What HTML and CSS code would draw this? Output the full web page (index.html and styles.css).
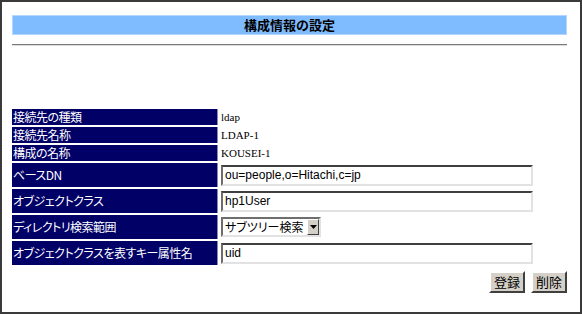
FILE: index.html
```html
<!DOCTYPE html>
<html lang="ja">
<head>
<meta charset="utf-8">
<link rel="stylesheet" href="styles.css">
</head>
<body>
<div class="page">
  <div class="title">構成情報の設定</div>
  <div class="rule"></div>
  <table class="form">
    <tr><th>接続先の種類</th><td class="val">ldap</td></tr>
    <tr><th>接続先名称</th><td class="val">LDAP-1</td></tr>
    <tr><th>構成の名称</th><td class="val">KOUSEI-1</td></tr>
    <tr class="in"><th>ベースDN</th><td><input class="text" type="text" value="ou=people,o=Hitachi,c=jp"></td></tr>
    <tr class="in"><th>オブジェクトクラス</th><td><input class="text" type="text" value="hp1User"></td></tr>
    <tr class="in"><th>ディレクトリ検索範囲</th><td>
      <div class="select"><span class="sel-text">サブツリー検索</span><span class="sel-btn"><svg width="7" height="4" viewBox="0 0 7 4"><path d="M0 0H7L3.5 4Z" fill="#000"/></svg></span></div>
    </td></tr>
    <tr class="in"><th>オブジェクトクラスを表すキー属性名</th><td><input class="text" type="text" value="uid"></td></tr>
  </table>
  <div class="buttons">
    <button class="btn">登録</button>
    <button class="btn">削除</button>
  </div>
</div>
</body>
</html>
```
FILE: styles.css
```css
html, body {
  margin: 0;
  padding: 0;
}
body {
  width: 582px;
  height: 314px;
  box-sizing: border-box;
  border: 2px solid #3a3a3a;
  background: #fff;
  font-family: "Noto Sans CJK JP", sans-serif;
  overflow: hidden;
}
.page {
  width: 555px;
  margin-left: 10px;
  padding-top: 13px;
}
.title {
  height: 18px;
  background: #7fbbff;
  border: 1px solid #b5d6ff;
  text-align: center;
  font-weight: bold;
  font-size: 13px;
  line-height: 18px;
  color: #000;
  font-feature-settings: "palt";
}
.rule {
  margin-top: 9px;
  height: 1px;
  background: #7a7a7a;
  border-bottom: 1px solid #dcdcdc;
}
.form {
  margin-top: 61px;
  border-spacing: 0 2px;
  margin-left: 0;
  border-collapse: separate;
}
.form th {
  width: 204px;
  background: #000066;
  color: #fff;
  font-weight: normal;
  font-size: 12px;
  letter-spacing: -0.5px;
  text-align: left;
  padding: 0 0 0 1px;
  height: 16px;
  line-height: 14px;
  border: 1px solid #8888bb;
  border-width: 0 1px 0 0;
  font-feature-settings: "palt";
  white-space: nowrap;
}
.form tr.in th {
  height: 24px;
}
.form td {
  padding: 0 0 0 3px;
}
.form td.val {
  font-family: "Liberation Serif", serif;
  font-size: 11px;
  color: #000;
}
.text {
  display: block;
  box-sizing: border-box;
  width: 312px;
  height: 21px;
  margin: 0;
  padding: 0 2px;
  border: 2px solid;
  border-color: #404040 #e2e2e2 #e2e2e2 #6e6e6e;
  font-family: "Liberation Sans", sans-serif;
  font-size: 12px;
  color: #000;
  background: #fff;
  outline: none;
}
.select {
  box-sizing: border-box;
  width: 100px;
  height: 20px;
  display: flex;
  align-items: stretch;
  border: 2px solid;
  border-color: #6e6e6e #e2e2e2 #e2e2e2 #6e6e6e;
  background: #fff;
}
.sel-text {
  flex: 1;
  font-size: 12px;
  line-height: 16px;
  padding-left: 2px;
  white-space: nowrap;
  overflow: hidden;
  color: #000;
  font-feature-settings: "palt";
}
.sel-btn {
  width: 12px;
  box-sizing: border-box;
  background: #d4d0c8;
  border: 1px solid;
  border-color: #fff #404040 #404040 #fff;
  display: flex;
  align-items: center;
  justify-content: center;
}
.buttons {
  display: flex;
  justify-content: flex-end;
  gap: 6px;
  margin-top: 4px;
}
.btn {
  box-sizing: border-box;
  height: 22px;
  padding: 0 3px;
  margin: 0;
  background: #d4d0c8;
  border: 2px solid;
  border-color: #fff #404040 #404040 #fff;
  font-family: "Noto Sans CJK JP", sans-serif;
  font-size: 13px;
  line-height: 16px;
  color: #000;
  font-feature-settings: "palt";
}
```
